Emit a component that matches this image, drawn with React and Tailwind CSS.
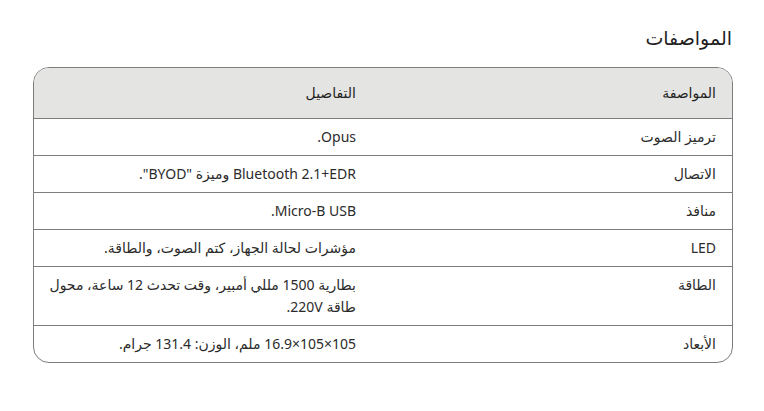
import React from "react";

const specs = [
  { name: "ترميز الصوت", value: "Opus." },
  { name: "الاتصال", value: 'Bluetooth 2.1+EDR وميزة "BYOD".' },
  { name: "منافذ", value: "Micro-B USB." },
  { name: "LED", value: "مؤشرات لحالة الجهاز، كتم الصوت، والطاقة." },
  { name: "الطاقة", value: "بطارية 1500 مللي أمبير، وقت تحدث 12 ساعة، محول طاقة 220V." },
  { name: "الأبعاد", value: "105×105×16.9 ملم، الوزن: 131.4 جرام." },
];

export default function App() {
  return (
    <div
      dir="rtl"
      className="min-h-[411px] bg-white px-8 pt-6 text-[#2b2b2b]"
      style={{ fontFamily: '"Noto Sans", "DejaVu Sans", sans-serif' }}
    >
      <h2 className="mb-[15px] text-[19px] font-medium leading-7 text-[#1f1f1f]">المواصفات</h2>

      <div className="-mr-px w-[700px] overflow-hidden rounded-2xl border border-[#7d7d7d]">
        <table className="w-full table-fixed border-collapse text-sm">
          <thead>
            <tr className="bg-[#e4e5e3]">
              <th className="w-[360px] px-4 py-3.5 text-right font-medium leading-[22px] text-[#1f1f1f]">
                المواصفة
              </th>
              <th className="pr-4 pl-2 py-3.5 text-right font-medium leading-[22px] text-[#1f1f1f]">
                التفاصيل
              </th>
            </tr>
          </thead>
          <tbody>
            {specs.map((s) => (
              <tr key={s.name} className="border-t border-[#7d7d7d] align-top">
                <td className="px-4 py-[7px] leading-[22px]">{s.name}</td>
                <td className="pr-4 pl-2 py-[7px] leading-[22px]">{s.value}</td>
              </tr>
            ))}
          </tbody>
        </table>
      </div>
    </div>
  );
}
